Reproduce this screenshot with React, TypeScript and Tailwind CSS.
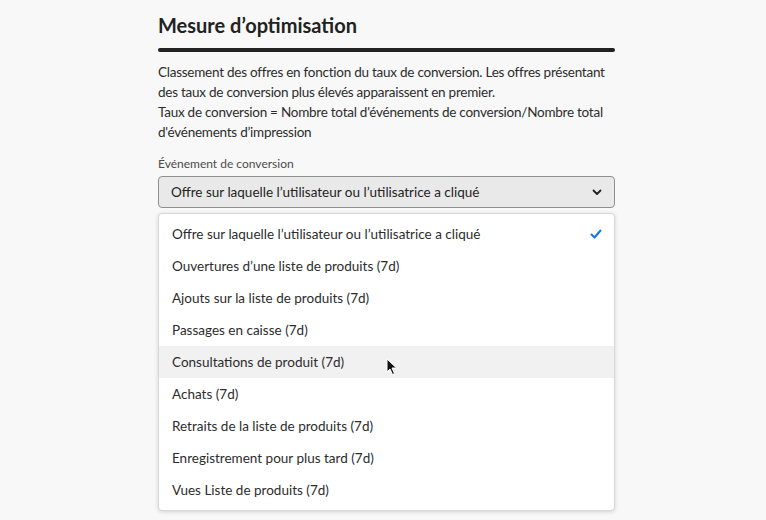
const options = [
  "Offre sur laquelle l’utilisateur ou l’utilisatrice a cliqué",
  "Ouvertures d’une liste de produits (7d)",
  "Ajouts sur la liste de produits (7d)",
  "Passages en caisse (7d)",
  "Consultations de produit (7d)",
  "Achats (7d)",
  "Retraits de la liste de produits (7d)",
  "Enregistrement pour plus tard (7d)",
  "Vues Liste de produits (7d)",
];

const Cursor = () => (
  <svg width="12" height="18" viewBox="0 0 12 18" className="absolute left-[227px] top-[12px]">
    <path d="M1 1 L1 14 L4 11 L6.5 16.5 L8.5 15.5 L6 10 L10.5 10 Z" fill="#111" stroke="#fff" strokeWidth="1" />
  </svg>
);

export default function App() {
  return (
    <div className="min-h-[520px] w-full bg-[#f8f8f8] font-['Lato','Noto_Sans',sans-serif] text-[#2c2c2c]">
      <div className="ml-[158px] w-[457px] pt-[12px]">
        <h2 className="text-[20px] leading-[26px] font-bold text-[#222]">Mesure d’optimisation</h2>
        <div className="mt-[10px] h-[4px] rounded-full bg-[#222]" />
        <p className="mt-[10px] text-[13.5px] leading-[20px] tracking-[-0.25px] text-[#2c2c2c]">
          Classement des offres en fonction du taux de conversion. Les offres présentant des taux de conversion plus
          élevés apparaissent en premier.
          <br />
          Taux de conversion = Nombre total d'événements de conversion/Nombre total d'événements d’impression
        </p>
        <div className="mt-[14px] text-[12px] leading-[16px] text-[#4b4b4b]">Événement de conversion</div>
        <div className="mt-[4px] flex h-[32px] items-center justify-between rounded-[4px] border border-[#8f8f8f] bg-[#e9e9e9] pl-[12px] pr-[12px]">
          <span className="text-[13.5px] text-[#222]">{options[0]}</span>
          <svg width="10" height="10" viewBox="0 0 10 10">
            <path d="M1.5 3.5 L5 7 L8.5 3.5" fill="none" stroke="#222" strokeWidth="1.8" strokeLinecap="round" strokeLinejoin="round" />
          </svg>
        </div>
        <div className="mt-[5px] rounded-[4px] border border-[#d8d8d8] bg-white py-[4px] shadow-[0_1px_4px_rgba(0,0,0,0.15)]">
          {options.map((opt, i) => (
            <div
              key={opt}
              className={
                "relative flex h-[32px] items-center justify-between pl-[13px] pr-[12px] text-[13.5px] text-[#2c2c2c] " +
                (i === 4 ? "bg-[#f1f1f1]" : "")
              }
            >
              <span>{opt}</span>
              {i === 0 && (
                <svg width="12" height="12" viewBox="0 0 12 12">
                  <path d="M1.5 6.5 L4.5 9.5 L10.5 2.5" fill="none" stroke="#1473e6" strokeWidth="2" strokeLinecap="round" strokeLinejoin="round" />
                </svg>
              )}
              {i === 4 && <Cursor />}
            </div>
          ))}
        </div>
      </div>
    </div>
  );
}
